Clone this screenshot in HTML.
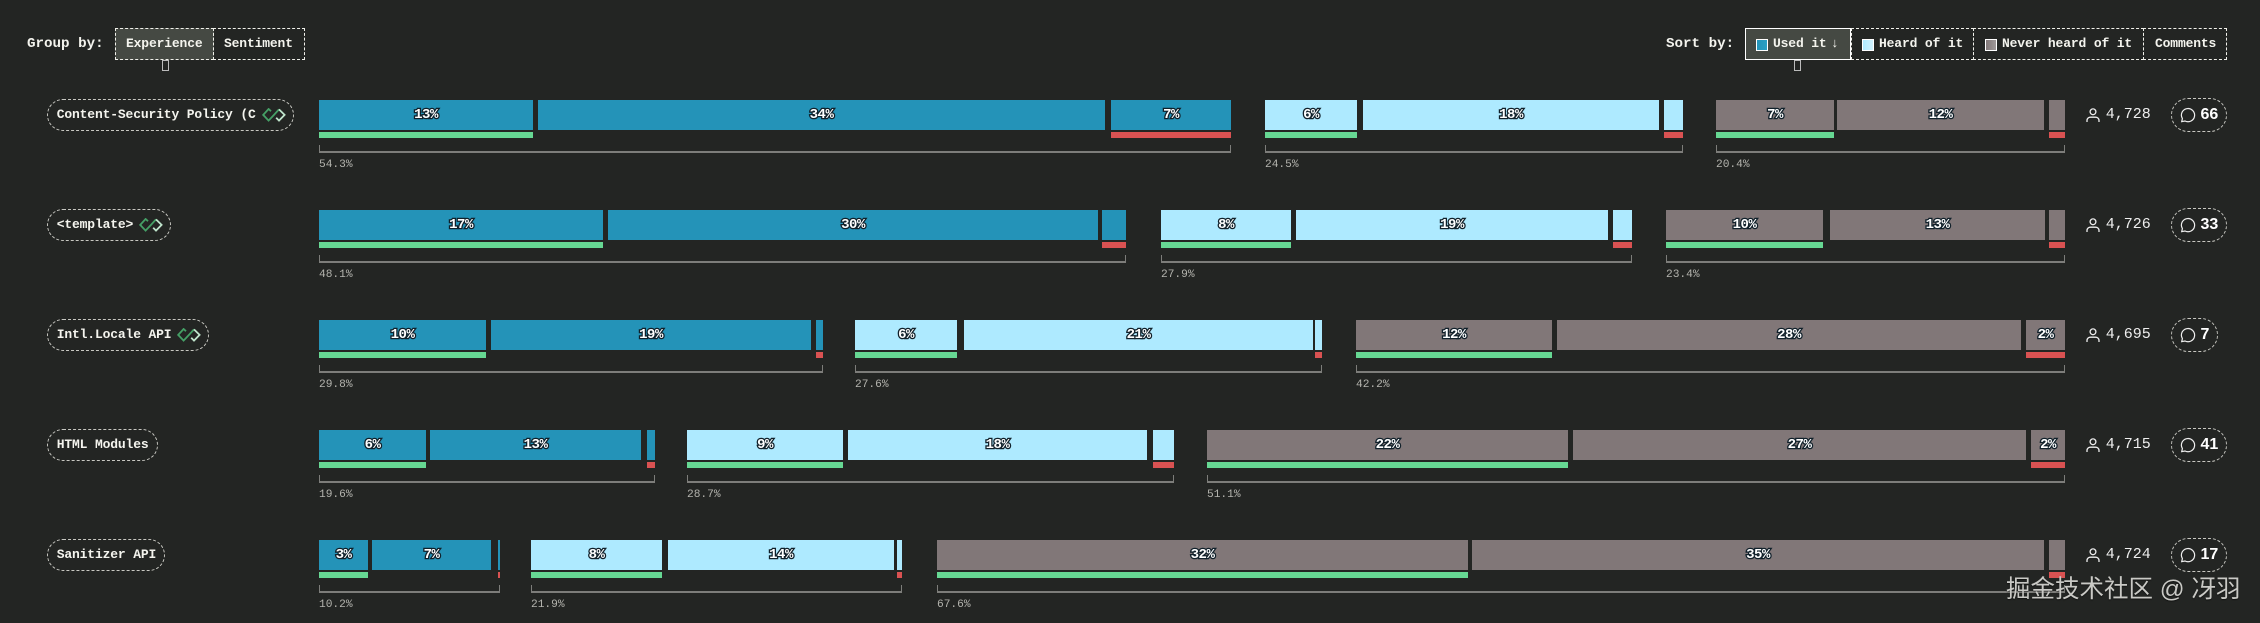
<!DOCTYPE html>
<html lang="zh"><head><meta charset="utf-8"><title>Features</title>
<style>
html,body{margin:0;padding:0;width:2260px;height:623px;overflow:hidden;background:#232523}
body{position:relative;font-family:"Liberation Mono",monospace;color:#f4f4ee}
div,span,svg{position:absolute;box-sizing:border-box}
.h{font-weight:700;font-size:14.2px;line-height:20px;top:34px;white-space:nowrap}
.b{top:28px;height:32px;border:1px dashed #f0f0ea;font-weight:700;font-size:13px;letter-spacing:-.15px;line-height:30px;white-space:nowrap}
.b span{top:0}
.on{background:#454943}
.sw{top:10px;width:12px;height:12px;border:1px solid #fff}
.t{top:60px;width:7px;height:11px;border:1.5px solid #bbb}
.r{left:0;top:0;width:2260px;height:90px}
.s{top:0;height:30px;text-align:center;font-weight:700;font-size:14px;letter-spacing:-.5px;line-height:30px;color:#fff;-webkit-text-stroke:2.6px #10202a;paint-order:stroke fill}
.u{background:#2493b8}.l{background:#aeeaff}.g{background:#817778}
.gr{top:32px;height:6px;background:#66d893}.re{top:32px;height:6px;background:#d95252}
.br{top:45px;height:8px;border:1px solid #7d7d7a;border-top:0;border-bottom-width:2px}
.p{top:59px;font-size:11.2px;line-height:12px;color:#b4b4ae;white-space:nowrap}
.n{left:47px;top:-1px;height:32px;border:1px dashed #c8c8c2;border-radius:16px}
.nt{left:56.7px;top:5px;font-weight:700;font-size:13px;letter-spacing:-.15px;line-height:20px;white-space:pre}
.c{left:2105.7px;top:5px;font-size:15px;line-height:20px;color:#eee}
.ui{left:2086px;top:8px}
.cp{left:2171px;top:-2px;height:34px;border:1px dashed #c8c8c2;border-radius:17px}
.ci{left:2180px;top:7px}
.cn{left:2200.5px;top:5px;font-family:"Liberation Sans",sans-serif;font-weight:700;font-size:16px;line-height:20px;color:#fff}
.ic{top:8px}
.wm{left:2006px;top:574px;font-family:"Liberation Sans","Noto Sans CJK SC",sans-serif;font-size:24.5px;line-height:32px;color:#c9c9c5;white-space:nowrap;text-shadow:0 1px 1px rgba(0,0,0,.5)}
</style></head><body>

<div class="h" style="left:27px">Group by:</div>
<div class="b on" style="left:115px;width:99px"><span style="left:10px">Experience</span></div>
<div class="b" style="left:213px;width:92px"><span style="left:10px">Sentiment</span></div>
<div class="t" style="left:161.5px"></div>

<div class="h" style="left:1666px">Sort by:</div>
<div class="b on" style="left:1745px;width:106px;border:1.5px solid #fff"><span style="left:27px">Used it</span><span style="left:85px;font-size:13px">↓</span><div class="sw" style="left:9.5px;background:linear-gradient(90deg,#2493b8,#2aa0c4)"></div></div>
<div class="b" style="left:1851px;width:123px"><div class="sw" style="left:10px;background:linear-gradient(90deg,#aeeaff,#d0f2ff)"></div><span style="left:27px">Heard of it</span></div>
<div class="b" style="left:1973px;width:171px"><div class="sw" style="left:11px;background:linear-gradient(90deg,#817778,#a09a9a)"></div><span style="left:28px">Never heard of it</span></div>
<div class="b" style="left:2143px;width:84px"><span style="left:11px">Comments</span></div>
<div class="t" style="left:1794px"></div>

<!-- Row 1 -->
<div class="r" style="top:100px">
<div class="n" style="width:247px"></div><div class="nt">Content-Security Policy (C</div>
<svg class="ic" style="left:261.5px" width="24" height="14" viewBox="0 0 24 14" fill="none" stroke-width="1.8"><path d="M9 3.2 6.6 1 1.2 6.9 6.6 12.6 12 6.9 17 1.4" stroke="#45a066"/><path d="M17 1.4 22.6 6.9 17 12.6 14.2 9.8" stroke="#c0e6cd"/></svg>
<div class="s u" style="left:319px;width:214px">13%</div><div class="s u" style="left:538px;width:567px">34%</div><div class="s u" style="left:1111px;width:120px">7%</div>
<div class="gr" style="left:319px;width:214px"></div><div class="re" style="left:1111px;width:120px"></div>
<div class="br" style="left:319px;width:912px"></div><div class="p" style="left:319px">54.3%</div>
<div class="s l" style="left:1265px;width:92px">6%</div><div class="s l" style="left:1363px;width:296px">18%</div><div class="s l" style="left:1664px;width:19px"></div>
<div class="gr" style="left:1265px;width:92px"></div><div class="re" style="left:1664px;width:19px"></div>
<div class="br" style="left:1265px;width:418px"></div><div class="p" style="left:1265px">24.5%</div>
<div class="s g" style="left:1716px;width:118px">7%</div><div class="s g" style="left:1837px;width:207px">12%</div><div class="s g" style="left:2049px;width:16px"></div>
<div class="gr" style="left:1716px;width:118px"></div><div class="re" style="left:2049px;width:16px"></div>
<div class="br" style="left:1716px;width:349px"></div><div class="p" style="left:1716px">20.4%</div>
<svg class="ui" width="14" height="15" viewBox="0 0 14 15" fill="none" stroke="#eee" stroke-width="1.3"><circle cx="7" cy="3.8" r="2.9"/><path d="M1 14V12.5C1 10.3 2.8 9.2 4.5 9.2H9.5C11.2 9.2 13 10.3 13 12.5V14"/></svg>
<div class="c">4,728</div>
<div class="cp" style="width:56px"></div>
<svg class="ci" width="16" height="16" viewBox="0 0 16 16" fill="none" stroke="#eee" stroke-width="1.2"><path d="M1.7 14.6 2.4 11.6A6.6 6.6 0 1 1 5 14 L1.7 14.6Z"/></svg>
<div class="cn">66</div>
</div>

<!-- Row 2 -->
<div class="r" style="top:210px">
<div class="n" style="width:124px"></div><div class="nt">&lt;template&gt;</div>
<svg class="ic" style="left:138.7px" width="24" height="14" viewBox="0 0 24 14" fill="none" stroke-width="1.8"><path d="M9 3.2 6.6 1 1.2 6.9 6.6 12.6 12 6.9 17 1.4" stroke="#45a066"/><path d="M17 1.4 22.6 6.9 17 12.6 14.2 9.8" stroke="#c0e6cd"/></svg>
<div class="s u" style="left:319px;width:284px">17%</div><div class="s u" style="left:608px;width:490px">30%</div><div class="s u" style="left:1102px;width:24px"></div>
<div class="gr" style="left:319px;width:284px"></div><div class="re" style="left:1102px;width:24px"></div>
<div class="br" style="left:319px;width:807px"></div><div class="p" style="left:319px">48.1%</div>
<div class="s l" style="left:1161px;width:130px">8%</div><div class="s l" style="left:1296px;width:312px">19%</div><div class="s l" style="left:1613px;width:19px"></div>
<div class="gr" style="left:1161px;width:130px"></div><div class="re" style="left:1613px;width:19px"></div>
<div class="br" style="left:1161px;width:471px"></div><div class="p" style="left:1161px">27.9%</div>
<div class="s g" style="left:1666px;width:157px">10%</div><div class="s g" style="left:1830px;width:215px">13%</div><div class="s g" style="left:2049px;width:16px"></div>
<div class="gr" style="left:1666px;width:157px"></div><div class="re" style="left:2049px;width:16px"></div>
<div class="br" style="left:1666px;width:399px"></div><div class="p" style="left:1666px">23.4%</div>
<svg class="ui" width="14" height="15" viewBox="0 0 14 15" fill="none" stroke="#eee" stroke-width="1.3"><circle cx="7" cy="3.8" r="2.9"/><path d="M1 14V12.5C1 10.3 2.8 9.2 4.5 9.2H9.5C11.2 9.2 13 10.3 13 12.5V14"/></svg>
<div class="c">4,726</div>
<div class="cp" style="width:56px"></div>
<svg class="ci" width="16" height="16" viewBox="0 0 16 16" fill="none" stroke="#eee" stroke-width="1.2"><path d="M1.7 14.6 2.4 11.6A6.6 6.6 0 1 1 5 14 L1.7 14.6Z"/></svg>
<div class="cn">33</div>
</div>

<!-- Row 3 -->
<div class="r" style="top:320px">
<div class="n" style="width:162px"></div><div class="nt">Intl.Locale API</div>
<svg class="ic" style="left:176.7px" width="24" height="14" viewBox="0 0 24 14" fill="none" stroke-width="1.8"><path d="M9 3.2 6.6 1 1.2 6.9 6.6 12.6 12 6.9 17 1.4" stroke="#45a066"/><path d="M17 1.4 22.6 6.9 17 12.6 14.2 9.8" stroke="#c0e6cd"/></svg>
<div class="s u" style="left:319px;width:167px">10%</div><div class="s u" style="left:491px;width:320px">19%</div><div class="s u" style="left:816px;width:7px"></div>
<div class="gr" style="left:319px;width:167px"></div><div class="re" style="left:816px;width:7px"></div>
<div class="br" style="left:319px;width:504px"></div><div class="p" style="left:319px">29.8%</div>
<div class="s l" style="left:855px;width:102px">6%</div><div class="s l" style="left:964px;width:349px">21%</div><div class="s l" style="left:1315px;width:7px"></div>
<div class="gr" style="left:855px;width:102px"></div><div class="re" style="left:1315px;width:7px"></div>
<div class="br" style="left:855px;width:467px"></div><div class="p" style="left:855px">27.6%</div>
<div class="s g" style="left:1356px;width:196px">12%</div><div class="s g" style="left:1557px;width:464px">28%</div><div class="s g" style="left:2026px;width:39px">2%</div>
<div class="gr" style="left:1356px;width:196px"></div><div class="re" style="left:2026px;width:39px"></div>
<div class="br" style="left:1356px;width:709px"></div><div class="p" style="left:1356px">42.2%</div>
<svg class="ui" width="14" height="15" viewBox="0 0 14 15" fill="none" stroke="#eee" stroke-width="1.3"><circle cx="7" cy="3.8" r="2.9"/><path d="M1 14V12.5C1 10.3 2.8 9.2 4.5 9.2H9.5C11.2 9.2 13 10.3 13 12.5V14"/></svg>
<div class="c">4,695</div>
<div class="cp" style="width:47px"></div>
<svg class="ci" width="16" height="16" viewBox="0 0 16 16" fill="none" stroke="#eee" stroke-width="1.2"><path d="M1.7 14.6 2.4 11.6A6.6 6.6 0 1 1 5 14 L1.7 14.6Z"/></svg>
<div class="cn">7</div>
</div>

<!-- Row 4 -->
<div class="r" style="top:430px">
<div class="n" style="width:111px"></div><div class="nt">HTML Modules</div>
<div class="s u" style="left:319px;width:107px">6%</div><div class="s u" style="left:430px;width:211px">13%</div><div class="s u" style="left:647px;width:8px"></div>
<div class="gr" style="left:319px;width:107px"></div><div class="re" style="left:647px;width:8px"></div>
<div class="br" style="left:319px;width:336px"></div><div class="p" style="left:319px">19.6%</div>
<div class="s l" style="left:687px;width:156px">9%</div><div class="s l" style="left:848px;width:299px">18%</div><div class="s l" style="left:1153px;width:21px"></div>
<div class="gr" style="left:687px;width:156px"></div><div class="re" style="left:1153px;width:21px"></div>
<div class="br" style="left:687px;width:487px"></div><div class="p" style="left:687px">28.7%</div>
<div class="s g" style="left:1207px;width:361px">22%</div><div class="s g" style="left:1573px;width:453px">27%</div><div class="s g" style="left:2031px;width:34px">2%</div>
<div class="gr" style="left:1207px;width:361px"></div><div class="re" style="left:2031px;width:34px"></div>
<div class="br" style="left:1207px;width:858px"></div><div class="p" style="left:1207px">51.1%</div>
<svg class="ui" width="14" height="15" viewBox="0 0 14 15" fill="none" stroke="#eee" stroke-width="1.3"><circle cx="7" cy="3.8" r="2.9"/><path d="M1 14V12.5C1 10.3 2.8 9.2 4.5 9.2H9.5C11.2 9.2 13 10.3 13 12.5V14"/></svg>
<div class="c">4,715</div>
<div class="cp" style="width:56px"></div>
<svg class="ci" width="16" height="16" viewBox="0 0 16 16" fill="none" stroke="#eee" stroke-width="1.2"><path d="M1.7 14.6 2.4 11.6A6.6 6.6 0 1 1 5 14 L1.7 14.6Z"/></svg>
<div class="cn">41</div>
</div>

<!-- Row 5 -->
<div class="r" style="top:540px">
<div class="n" style="width:118px"></div><div class="nt">Sanitizer API</div>
<div class="s u" style="left:319px;width:49px">3%</div><div class="s u" style="left:372px;width:119px">7%</div><div class="s u" style="left:498px;width:2px"></div>
<div class="gr" style="left:319px;width:49px"></div><div class="re" style="left:498px;width:2px"></div>
<div class="br" style="left:319px;width:181px"></div><div class="p" style="left:319px">10.2%</div>
<div class="s l" style="left:531px;width:131px">8%</div><div class="s l" style="left:668px;width:226px">14%</div><div class="s l" style="left:897px;width:5px"></div>
<div class="gr" style="left:531px;width:131px"></div><div class="re" style="left:897px;width:5px"></div>
<div class="br" style="left:531px;width:371px"></div><div class="p" style="left:531px">21.9%</div>
<div class="s g" style="left:937px;width:531px">32%</div><div class="s g" style="left:1472px;width:572px">35%</div><div class="s g" style="left:2049px;width:16px"></div>
<div class="gr" style="left:937px;width:531px"></div><div class="re" style="left:2049px;width:16px"></div>
<div class="br" style="left:937px;width:1128px"></div><div class="p" style="left:937px">67.6%</div>
<svg class="ui" width="14" height="15" viewBox="0 0 14 15" fill="none" stroke="#eee" stroke-width="1.3"><circle cx="7" cy="3.8" r="2.9"/><path d="M1 14V12.5C1 10.3 2.8 9.2 4.5 9.2H9.5C11.2 9.2 13 10.3 13 12.5V14"/></svg>
<div class="c">4,724</div>
<div class="cp" style="width:56px"></div>
<svg class="ci" width="16" height="16" viewBox="0 0 16 16" fill="none" stroke="#eee" stroke-width="1.2"><path d="M1.7 14.6 2.4 11.6A6.6 6.6 0 1 1 5 14 L1.7 14.6Z"/></svg>
<div class="cn">17</div>
</div>

<div class="wm">掘金技术社区 @ 冴羽</div>
</body></html>
